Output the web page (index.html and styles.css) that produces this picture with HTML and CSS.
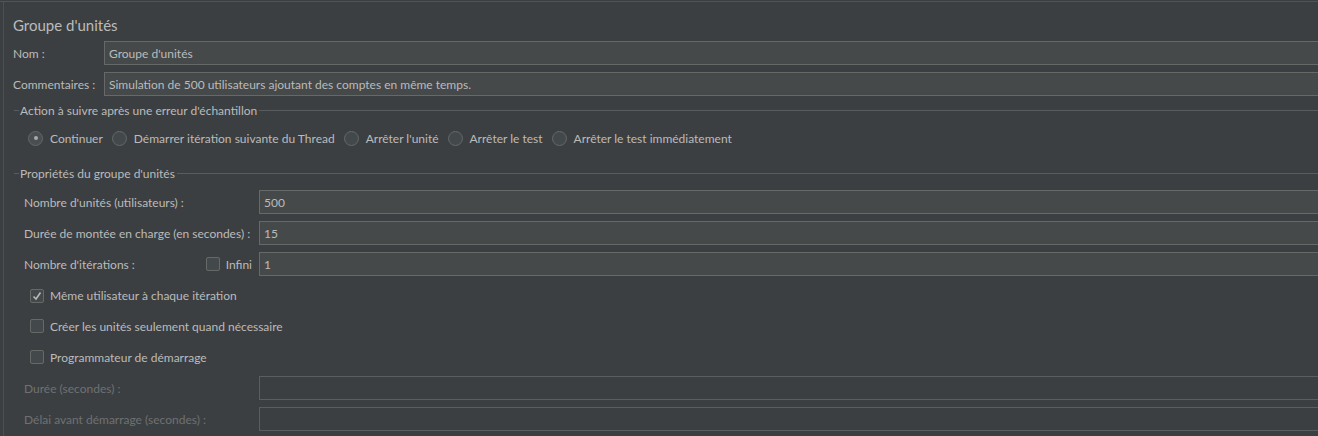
FILE: index.html
```html
<!DOCTYPE html>
<html lang="fr">
<head>
<meta charset="utf-8">
<title>Groupe d'unités</title>
<link rel="stylesheet" href="styles.css">
</head>
<body>
<div class="top">
  <div class="panel">
    <h1 class="title">Groupe d'unités</h1>
    <div class="form-top">
      <label class="lbl">Nom :</label>
      <div class="field">Groupe d'unités</div>
      <label class="lbl">Commentaires :</label>
      <div class="field">Simulation de 500 utilisateurs ajoutant des comptes en même temps.</div>
    </div>

    <section class="group">
      <div class="legend"><span>Action à suivre après une erreur d'échantillon</span></div>
      <div class="radios">
        <span class="radio"><span class="circle on"></span>Continuer</span>
        <span class="radio"><span class="circle"></span>Démarrer itération suivante du Thread</span>
        <span class="radio"><span class="circle"></span>Arrêter l'unité</span>
        <span class="radio"><span class="circle"></span>Arrêter le test</span>
        <span class="radio"><span class="circle"></span>Arrêter le test immédiatement</span>
      </div>
    </section>

    <section class="group">
      <div class="legend legend2"><span>Propriétés du groupe d'unités</span></div>
      <div class="props">
        <label class="lbl">Nombre d'unités (utilisateurs) :</label>
        <div class="field">500</div>
        <label class="lbl">Durée de montée en charge (en secondes) :</label>
        <div class="field">15</div>
        <div class="lbl split"><span>Nombre d'itérations :</span><span class="check"><span class="box"></span>Infini</span></div>
        <div class="field">1</div>
        <div class="check row first"><span class="box"><svg viewBox="0 0 14 14" width="14" height="14"><polyline points="3.5,7.5 6,10 10.5,3.5" fill="none" stroke="#b8b8b8" stroke-width="1.6"/></svg></span>Même utilisateur à chaque itération</div>
        <div class="check row"><span class="box"></span>Créer les unités seulement quand nécessaire</div>
        <div class="check row"><span class="box"></span>Programmateur de démarrage</div>
        <label class="lbl disabled">Durée (secondes) :</label>
        <div class="field off"></div>
        <label class="lbl disabled">Délai avant démarrage (secondes) :</label>
        <div class="field off"></div>
      </div>
    </section>
  </div>
</div>
</body>
</html>
```

FILE: styles.css
```css
html, body {
  margin: 0;
  padding: 0;
  background: #3c3f41;
  overflow: hidden;
}

body {
  font-family: Lato, "Open Sans", sans-serif;
  font-size: 12px;
  color: #bbbbbb;
  width: 1340px;
  height: 436px;
}

.top {
  margin-top: 1px;
  border-top: 1px solid #515456;
  height: 434px;
}

.panel {
  margin-left: 3px;
  border-left: 1px solid #4d5052;
  height: 100%;
  padding-left: 9px;
}

.title {
  margin: 0;
  padding-top: 13px;
  font-size: 15px;
  font-weight: normal;
  line-height: 20px;
  color: #bbbbbb;
}

.form-top {
  display: grid;
  grid-template-columns: 91px 1fr;
  grid-auto-rows: 24px;
  row-gap: 7px;
  margin-top: 6px;
}

.lbl {
  display: flex;
  align-items: center;
  white-space: nowrap;
}

.lbl.disabled {
  color: #6e7173;
}

.field {
  box-sizing: border-box;
  height: 24px;
  background: #45494a;
  border: 1px solid #676969;
  padding: 0 4px;
  display: flex;
  align-items: center;
  white-space: nowrap;
  color: #bbbbbb;
}

.field.off {
  background: #3c3f41;
  border-color: #5b5d5e;
}

.group {
  margin-left: 1px;
}

.legend {
  display: flex;
  align-items: center;
  height: 16px;
  margin-top: 6px;
}

.legend::before {
  content: "";
  width: 5px;
  border-top: 1px solid #5a5d5f;
  margin-right: 1px;
}

.legend::after {
  content: "";
  flex: 1;
  border-top: 1px solid #5a5d5f;
  margin-left: 2px;
}

.legend2 {
  margin-top: 17px;
}

.radios {
  display: flex;
  align-items: center;
  height: 20px;
  margin-top: 10px;
  padding-left: 14px;
  gap: 9px;
}

.radio {
  display: flex;
  align-items: center;
  gap: 7px;
  white-space: nowrap;
}

.circle {
  box-sizing: border-box;
  width: 15px;
  height: 15px;
  border-radius: 50%;
  border: 1px solid #656768;
  background: #43494a;
  display: flex;
  align-items: center;
  justify-content: center;
}

.circle.on {
  background: #4a4e50;
}

.circle.on::after {
  content: "";
  width: 4px;
  height: 4px;
  border-radius: 50%;
  background: #a9a9a9;
}

.props {
  display: grid;
  grid-template-columns: 235px 1fr;
  grid-auto-rows: 24px;
  row-gap: 7px;
  margin-top: 9px;
  padding-left: 10px;
}

.split {
  justify-content: space-between;
  padding-right: 7px;
}

.check {
  display: flex;
  align-items: center;
  gap: 6px;
  white-space: nowrap;
}

.box {
  box-sizing: border-box;
  width: 14px;
  height: 14px;
  border: 1px solid #676969;
  border-radius: 2px;
  background: #43494a;
  display: flex;
  align-items: center;
  justify-content: center;
}

.box svg {
  display: block;
  margin: -1px;
}

.row {
  grid-column: 1 / -1;
  padding-left: 6px;
}

.row.first {
  margin-top: 1px;
}
```
